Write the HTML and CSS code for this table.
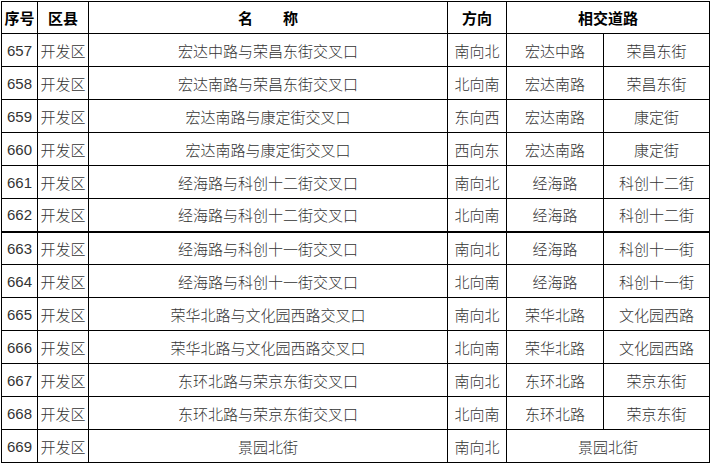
FILE: index.html
```html
<!DOCTYPE html>
<html lang="zh">
<head>
<meta charset="utf-8">
<link rel="stylesheet" href="styles.css">
</head>
<body>
<table class="grid">
<colgroup>
<col class="c-no"><col class="c-dist"><col class="c-name"><col class="c-dir"><col class="c-r1"><col class="c-r2">
</colgroup>
<thead>
<tr class="head">
<th>序号</th><th>区县</th><th>名　　称</th><th>方向</th><th colspan="2">相交道路</th>
</tr>
</thead>
<tbody>
<tr><td class="num">657</td><td class="dist">开发区</td><td>宏达中路与荣昌东街交叉口</td><td>南向北</td><td>宏达中路</td><td>荣昌东街</td></tr>
<tr><td class="num">658</td><td class="dist">开发区</td><td>宏达南路与荣昌东街交叉口</td><td>北向南</td><td>宏达南路</td><td>荣昌东街</td></tr>
<tr><td class="num">659</td><td class="dist">开发区</td><td>宏达南路与康定街交叉口</td><td>东向西</td><td>宏达南路</td><td>康定街</td></tr>
<tr><td class="num">660</td><td class="dist">开发区</td><td>宏达南路与康定街交叉口</td><td>西向东</td><td>宏达南路</td><td>康定街</td></tr>
<tr><td class="num">661</td><td class="dist">开发区</td><td>经海路与科创十二街交叉口</td><td>南向北</td><td>经海路</td><td>科创十二街</td></tr>
<tr class="split"><td class="num">662</td><td class="dist">开发区</td><td>经海路与科创十二街交叉口</td><td>北向南</td><td>经海路</td><td>科创十二街</td></tr>
<tr><td class="num">663</td><td class="dist">开发区</td><td>经海路与科创十一街交叉口</td><td>南向北</td><td>经海路</td><td>科创十一街</td></tr>
<tr><td class="num">664</td><td class="dist">开发区</td><td>经海路与科创十一街交叉口</td><td>北向南</td><td>经海路</td><td>科创十一街</td></tr>
<tr><td class="num">665</td><td class="dist">开发区</td><td>荣华北路与文化园西路交叉口</td><td>南向北</td><td>荣华北路</td><td>文化园西路</td></tr>
<tr><td class="num">666</td><td class="dist">开发区</td><td>荣华北路与文化园西路交叉口</td><td>北向南</td><td>荣华北路</td><td>文化园西路</td></tr>
<tr><td class="num">667</td><td class="dist">开发区</td><td>东环北路与荣京东街交叉口</td><td>南向北</td><td>东环北路</td><td>荣京东街</td></tr>
<tr><td class="num">668</td><td class="dist">开发区</td><td>东环北路与荣京东街交叉口</td><td>北向南</td><td>东环北路</td><td>荣京东街</td></tr>
<tr><td class="num">669</td><td class="dist">开发区</td><td>景园北街</td><td>南向北</td><td colspan="2">景园北街</td></tr>
</tbody>
</table>
</body>
</html>
```
FILE: styles.css
```css
html, body {
  margin: 0;
  padding: 0;
  background: #ffffff;
}
body {
  padding: 1px 0 0 1px;
}
.grid {
  border-collapse: collapse;
  table-layout: fixed;
  width: 708px;
  font-family: "Noto Sans CJK SC", "Liberation Sans", sans-serif;
  font-size: 15px;
  font-weight: 300;
  color: #333333;
}
.c-no { width: 36px; }
.c-dist { width: 51px; }
.c-name { width: 359px; }
.c-dir { width: 59px; }
.c-r1 { width: 97px; }
.c-r2 { width: 106px; }
.grid th, .grid td {
  border: 1px solid #000;
  padding: 0;
  text-align: center;
  vertical-align: middle;
  white-space: nowrap;
  overflow: hidden;
}
.grid th {
  font-weight: bold;
  font-size: 15px;
  color: #000;
}
.head {
  height: 32px;
}
.grid tbody tr {
  height: 33px;
}
.grid tbody tr.split td {
  border-bottom: 2px solid #000;
}
.grid td.num {
  font-family: "Liberation Sans", sans-serif;
  font-weight: normal;
  font-size: 15px;
}
```
